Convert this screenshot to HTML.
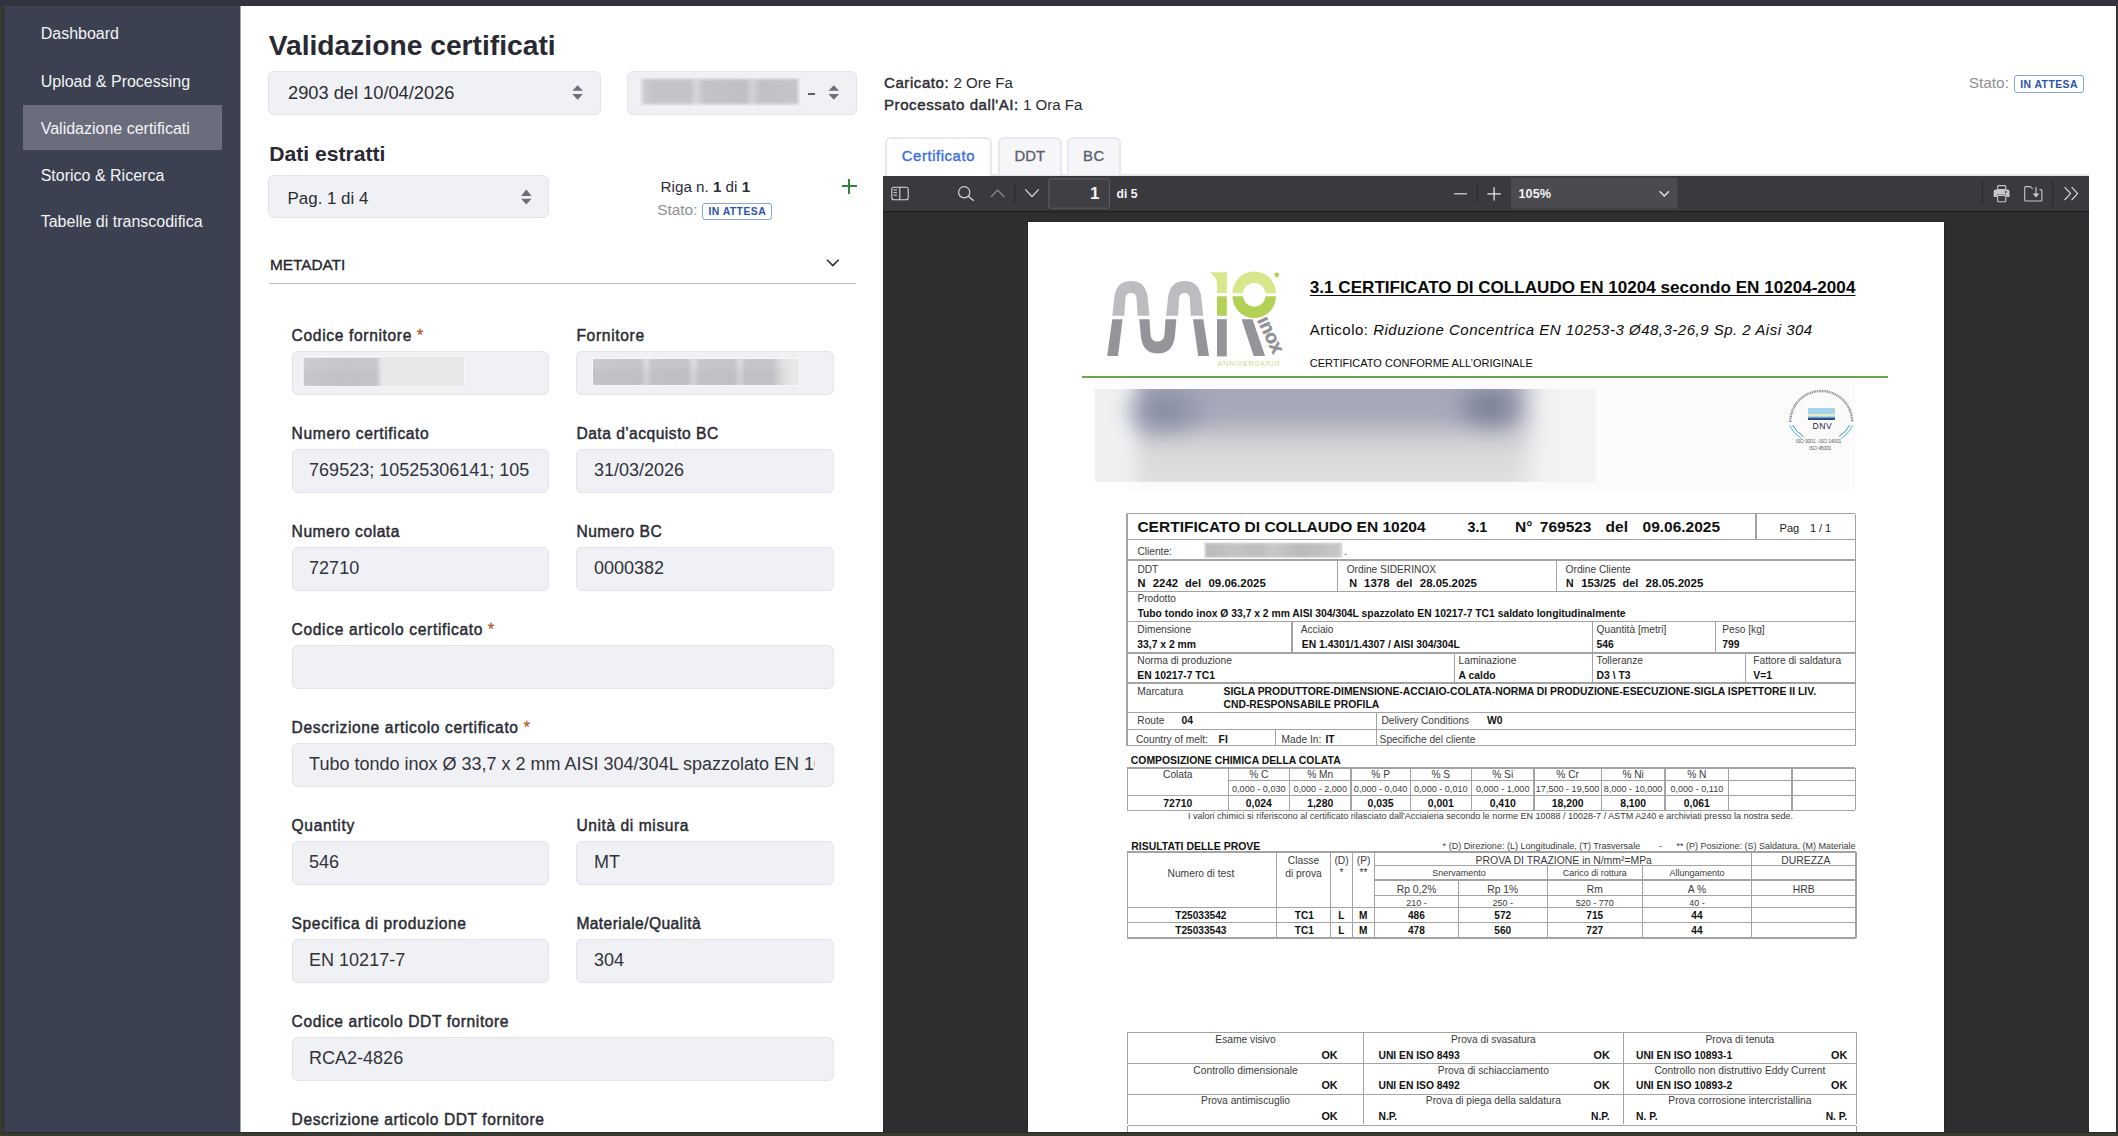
<!DOCTYPE html>
<html><head><meta charset="utf-8"><style>*{box-sizing:border-box;margin:0;padding:0}
html,body{width:2118px;height:1136px;overflow:hidden;background:#363d2f;font-family:"Liberation Sans",sans-serif;position:relative}
div{position:absolute}
.t{white-space:nowrap;line-height:1}
svg{position:absolute;overflow:visible}
</style></head><body>
<div style="left:0.00px;top:0.00px;width:2118.00px;height:6.00px;background:#33333f;"></div>
<div style="left:3.00px;top:6.00px;width:1.00px;height:1127.00px;background:#2b2b2f;"></div>
<div style="left:2116.00px;top:6.00px;width:1.00px;height:1127.00px;background:#2b2b2f;"></div>
<div style="left:3.00px;top:1132.00px;width:2114.00px;height:1.00px;background:#2b2b2f;"></div>
<div style="left:4.00px;top:6.00px;width:236.00px;height:1126.00px;background:#3b4150;"></div>
<div style="left:240.00px;top:6.00px;width:1.00px;height:1126.00px;background:#a3a5ae;"></div>
<div style="left:23.00px;top:105.00px;width:199.00px;height:45.00px;background:#6b6c7c;"></div>
<div class="t" style="left:40.70px;top:26.00px;font-size:16.00px;color:#f3f4f6;">Dashboard</div>
<div class="t" style="left:40.70px;top:74.00px;font-size:16.00px;color:#f3f4f6;">Upload &amp; Processing</div>
<div class="t" style="left:40.70px;top:121.00px;font-size:16.00px;color:#f3f4f6;">Validazione certificati</div>
<div class="t" style="left:40.70px;top:168.00px;font-size:16.00px;color:#f3f4f6;">Storico &amp; Ricerca</div>
<div class="t" style="left:40.70px;top:214.00px;font-size:16.00px;color:#f3f4f6;">Tabelle di transcodifica</div>
<div style="left:241.00px;top:6.00px;width:1875.00px;height:1126.00px;background:#ffffff;"></div>
<div class="t" style="left:268.70px;top:31.00px;font-size:28.22px;color:#282933;font-weight:bold;">Validazione certificati</div>
<div style="left:268.00px;top:71.00px;width:332.50px;height:43.50px;background:#f0f1f4;border:1px solid #e3e4e9;border-radius:6px;"></div>
<div class="t" style="left:288.00px;top:84.00px;font-size:18.26px;color:#2b2c34;">2903 del 10/04/2026</div>
<svg style="left:0;top:0" width="1" height="1"><polygon points="572.35,90.7 582.85,90.7 577.6,85.2" fill="#6c6d7d"/><polygon points="572.35,94 582.85,94 577.6,99.8" fill="#6c6d7d"/></svg>
<div style="left:627.00px;top:71.00px;width:230.00px;height:43.50px;background:#f0f1f4;border:1px solid #e3e4e9;border-radius:6px;"></div>
<div style="left:639.00px;top:77.30px;width:162.00px;height:29.30px;background:#ececee;border:1px solid #f6f6f8;"></div>
<div style="left:642.00px;top:79.00px;width:156.00px;height:25.00px;background:linear-gradient(90deg,#cfd0d3 0%,#c3c4c8 6%,#c3c4c8 31%,#d6d7da 35%,#c2c3c7 40%,#bfc0c4 66%,#d2d3d6 71%,#c0c1c5 76%,#c4c5c9 100%);filter:blur(1.5px);"></div>
<div style="left:808.00px;top:93.20px;width:6.50px;height:1.80px;background:#5c5d66;"></div>
<svg style="left:0;top:0" width="1" height="1"><polygon points="828.55,90.7 839.05,90.7 833.8,85.2" fill="#6c6d7d"/><polygon points="828.55,94 839.05,94 833.8,99.8" fill="#6c6d7d"/></svg>
<div class="t" style="left:269.20px;top:143.00px;font-size:21.12px;color:#282933;font-weight:bold;">Dati estratti</div>
<div style="left:268.00px;top:175.30px;width:281.00px;height:43.20px;background:#f0f1f4;border:1px solid #e3e4e9;border-radius:6px;"></div>
<div class="t" style="left:287.60px;top:191.00px;font-size:16.90px;color:#2b2c34;">Pag. 1 di 4</div>
<svg style="left:0;top:0" width="1" height="1"><polygon points="521.05,195.9 531.55,195.9 526.3,189.5" fill="#6c6d7d"/><polygon points="521.05,198.7 531.55,198.7 526.3,204.4" fill="#6c6d7d"/></svg>
<div class="t" style="left:660.6px;top:179px;font-size:15.2px;color:#2b2c34">Riga n. <b>1</b> di <b>1</b></div>
<div class="t" style="left:657.20px;top:202.00px;font-size:15.42px;color:#8f8f93;">Stato:</div>
<div style="left:702.40px;top:202.60px;width:69.60px;height:17.10px;background:#ffffff;border:1px solid #86a4e2;border-radius:3px;"></div>
<div class="t" style="left:708.40px;top:207.00px;font-size:10.40px;color:#2c52ae;font-weight:bold;letter-spacing:0.45px;">IN ATTESA</div>
<div style="left:841.70px;top:185.20px;width:15.30px;height:1.80px;background:#35833a;"></div>
<div style="left:848.40px;top:178.50px;width:1.80px;height:15.20px;background:#35833a;"></div>
<div class="t" style="left:269.90px;top:257.00px;font-size:15.36px;color:#25262e;-webkit-text-stroke:0.35px #25262e;">METADATI</div>
<div style="left:269.00px;top:282.50px;width:587.00px;height:1.50px;background:#b9bacb;"></div>
<svg style="left:0;top:0" width="1" height="1"><polyline points="827,259.8 832.8,265.6 838.6,259.8" fill="none" stroke="#2d2e36" stroke-width="1.6"/></svg>
<div class="t" style="left:291.6px;top:328px;font-size:15.6px;color:#2a2b33;-webkit-text-stroke:0.45px #2a2b33;letter-spacing:0.647px">Codice fornitore <span style="color:#b5561f;-webkit-text-stroke:0.3px #b5561f">*</span></div>
<div style="left:291.60px;top:351.20px;width:257.40px;height:43.50px;background:#f0f1f4;border:1px solid #e3e4e9;border-radius:6px;"></div>
<div class="t" style="left:576.4px;top:328px;font-size:15.6px;color:#2a2b33;-webkit-text-stroke:0.45px #2a2b33;letter-spacing:0.671px">Fornitore</div>
<div style="left:576.40px;top:351.20px;width:257.60px;height:43.50px;background:#f0f1f4;border:1px solid #e3e4e9;border-radius:6px;"></div>
<div class="t" style="left:291.6px;top:426px;font-size:15.6px;color:#2a2b33;-webkit-text-stroke:0.45px #2a2b33;letter-spacing:0.625px">Numero certificato</div>
<div style="left:291.60px;top:449.20px;width:257.40px;height:43.50px;background:#f0f1f4;border:1px solid #e3e4e9;border-radius:6px;"></div>
<div style="left:309.1px;top:449.2px;width:220.89999999999998px;height:43.5px;overflow:hidden"><div class="t" style="left:0;top:11.80px;font-size:18px;color:#32333b">769523; 10525306141; 10525306141</div></div>
<div class="t" style="left:576.4px;top:426px;font-size:15.6px;color:#2a2b33;-webkit-text-stroke:0.45px #2a2b33;letter-spacing:0.519px">Data d&#x27;acquisto BC</div>
<div style="left:576.40px;top:449.20px;width:257.60px;height:43.50px;background:#f0f1f4;border:1px solid #e3e4e9;border-radius:6px;"></div>
<div style="left:593.9px;top:449.2px;width:221.10000000000002px;height:43.5px;overflow:hidden"><div class="t" style="left:0;top:11.80px;font-size:18px;color:#32333b">31/03/2026</div></div>
<div class="t" style="left:291.6px;top:524px;font-size:15.6px;color:#2a2b33;-webkit-text-stroke:0.45px #2a2b33;letter-spacing:0.532px">Numero colata</div>
<div style="left:291.60px;top:547.20px;width:257.40px;height:43.50px;background:#f0f1f4;border:1px solid #e3e4e9;border-radius:6px;"></div>
<div style="left:309.1px;top:547.2px;width:220.89999999999998px;height:43.5px;overflow:hidden"><div class="t" style="left:0;top:11.80px;font-size:18px;color:#32333b">72710</div></div>
<div class="t" style="left:576.4px;top:524px;font-size:15.6px;color:#2a2b33;-webkit-text-stroke:0.45px #2a2b33;letter-spacing:0.480px">Numero BC</div>
<div style="left:576.40px;top:547.20px;width:257.60px;height:43.50px;background:#f0f1f4;border:1px solid #e3e4e9;border-radius:6px;"></div>
<div style="left:593.9px;top:547.2px;width:221.10000000000002px;height:43.5px;overflow:hidden"><div class="t" style="left:0;top:11.80px;font-size:18px;color:#32333b">0000382</div></div>
<div class="t" style="left:291.6px;top:622px;font-size:15.6px;color:#2a2b33;-webkit-text-stroke:0.45px #2a2b33;letter-spacing:0.641px">Codice articolo certificato <span style="color:#b5561f;-webkit-text-stroke:0.3px #b5561f">*</span></div>
<div style="left:291.60px;top:645.20px;width:542.40px;height:43.50px;background:#f0f1f4;border:1px solid #e3e4e9;border-radius:6px;"></div>
<div class="t" style="left:291.6px;top:720px;font-size:15.6px;color:#2a2b33;-webkit-text-stroke:0.45px #2a2b33;letter-spacing:0.623px">Descrizione articolo certificato <span style="color:#b5561f;-webkit-text-stroke:0.3px #b5561f">*</span></div>
<div style="left:291.60px;top:743.20px;width:542.40px;height:43.50px;background:#f0f1f4;border:1px solid #e3e4e9;border-radius:6px;"></div>
<div style="left:309.1px;top:743.2px;width:505.9px;height:43.5px;overflow:hidden"><div class="t" style="left:0;top:11.80px;font-size:18px;color:#32333b">Tubo tondo inox Ø 33,7 x 2 mm AISI 304/304L spazzolato EN 10217-7</div></div>
<div class="t" style="left:291.6px;top:818px;font-size:15.6px;color:#2a2b33;-webkit-text-stroke:0.45px #2a2b33;letter-spacing:0.647px">Quantity</div>
<div style="left:291.60px;top:841.20px;width:257.40px;height:43.50px;background:#f0f1f4;border:1px solid #e3e4e9;border-radius:6px;"></div>
<div style="left:309.1px;top:841.2px;width:220.89999999999998px;height:43.5px;overflow:hidden"><div class="t" style="left:0;top:11.80px;font-size:18px;color:#32333b">546</div></div>
<div class="t" style="left:576.4px;top:818px;font-size:15.6px;color:#2a2b33;-webkit-text-stroke:0.45px #2a2b33;letter-spacing:0.577px">Unità di misura</div>
<div style="left:576.40px;top:841.20px;width:257.60px;height:43.50px;background:#f0f1f4;border:1px solid #e3e4e9;border-radius:6px;"></div>
<div style="left:593.9px;top:841.2px;width:221.10000000000002px;height:43.5px;overflow:hidden"><div class="t" style="left:0;top:11.80px;font-size:18px;color:#32333b">MT</div></div>
<div class="t" style="left:291.6px;top:916px;font-size:15.6px;color:#2a2b33;-webkit-text-stroke:0.45px #2a2b33;letter-spacing:0.599px">Specifica di produzione</div>
<div style="left:291.60px;top:939.20px;width:257.40px;height:43.50px;background:#f0f1f4;border:1px solid #e3e4e9;border-radius:6px;"></div>
<div style="left:309.1px;top:939.2px;width:220.89999999999998px;height:43.5px;overflow:hidden"><div class="t" style="left:0;top:11.80px;font-size:18px;color:#32333b">EN 10217-7</div></div>
<div class="t" style="left:576.4px;top:916px;font-size:15.6px;color:#2a2b33;-webkit-text-stroke:0.45px #2a2b33;letter-spacing:0.407px">Materiale/Qualità</div>
<div style="left:576.40px;top:939.20px;width:257.60px;height:43.50px;background:#f0f1f4;border:1px solid #e3e4e9;border-radius:6px;"></div>
<div style="left:593.9px;top:939.2px;width:221.10000000000002px;height:43.5px;overflow:hidden"><div class="t" style="left:0;top:11.80px;font-size:18px;color:#32333b">304</div></div>
<div class="t" style="left:291.6px;top:1014px;font-size:15.6px;color:#2a2b33;-webkit-text-stroke:0.45px #2a2b33;letter-spacing:0.575px">Codice articolo DDT fornitore</div>
<div style="left:291.60px;top:1037.20px;width:542.40px;height:43.50px;background:#f0f1f4;border:1px solid #e3e4e9;border-radius:6px;"></div>
<div style="left:309.1px;top:1037.2px;width:505.9px;height:43.5px;overflow:hidden"><div class="t" style="left:0;top:11.80px;font-size:18px;color:#32333b">RCA2-4826</div></div>
<div class="t" style="left:291.6px;top:1112px;font-size:15.6px;color:#2a2b33;-webkit-text-stroke:0.45px #2a2b33;letter-spacing:0.568px">Descrizione articolo DDT fornitore</div>
<div style="left:302.20px;top:356.40px;width:163.10px;height:31.00px;background:#e9e9eb;border:1.5px solid #f7f7f8;"></div>
<div style="left:304px;top:358px;width:159.5px;height:28px;overflow:hidden"><div style="left:-6px;top:-6px;width:171px;height:40px;filter:blur(1.6px);background:
linear-gradient(90deg,rgba(255,255,255,0) 0px,rgba(255,255,255,0) 80px,#e8e8ea 84px),
linear-gradient(180deg,rgba(200,201,206,0) 0px,rgba(200,201,206,0) 14px,rgba(175,176,182,0.22) 22px,rgba(175,176,182,0.22) 32px,rgba(200,201,206,0) 40px),
linear-gradient(90deg,#cdced2 0px,#cbccd0 12px,#c6c7cb 40px,#c7c8cc 78px,#e8e8ea 85px,#e9e9eb 171px)"></div></div>
<div style="left:591.90px;top:357.90px;width:208.50px;height:28.40px;background:#eaeaec;border:1.5px solid #f7f7f8;"></div>
<div style="left:593.4px;top:359.4px;width:205.5px;height:25.4px;overflow:hidden"><div style="left:-6px;top:-6px;width:217.5px;height:37.4px;filter:blur(1.6px);background:
linear-gradient(90deg,rgba(233,233,235,0) 0px,rgba(233,233,235,0) 186px,#e6e6e8 205px,#e9e9eb 217px),
linear-gradient(180deg,rgba(200,201,206,0) 0px,rgba(200,201,206,0) 12px,rgba(170,171,178,0.22) 19px,rgba(170,171,178,0.22) 29px,rgba(200,201,206,0) 37px),
linear-gradient(90deg,#cbccd0 0px,#c7c8cc 20px,#c5c6ca 54px,#dadbde 58px,#dadbde 61px,#c6c7cb 64px,#c4c5c9 101px,#dcdde0 105px,#dcdde0 108px,#c6c7cb 112px,#c5c6ca 148px,#dadbdd 152px,#dadbdd 154px,#c6c7cb 158px,#c6c7cb 186px,#dfe0e2 200px,#e9e9eb 217px)"></div></div>
<div class="t" style="left:884px;top:75px;font-size:15.05px;color:#2a2b33"><span style="-webkit-text-stroke:0.45px #2a2b33;letter-spacing:0.557px">Caricato:</span> 2 Ore Fa</div>
<div class="t" style="left:884px;top:97px;font-size:15.05px;color:#2a2b33"><span style="-webkit-text-stroke:0.45px #2a2b33;letter-spacing:0.564px">Processato dall&#x27;AI:</span> 1 Ora Fa</div>
<div class="t" style="left:1968.70px;top:75.00px;font-size:15.42px;color:#8f8f93;">Stato:</div>
<div style="left:2014.40px;top:75.20px;width:69.60px;height:17.40px;background:#ffffff;border:1px solid #86a4e2;border-radius:3px;"></div>
<div class="t" style="left:2020.20px;top:80.00px;font-size:10.40px;color:#2c52ae;font-weight:bold;letter-spacing:0.45px;">IN ATTESA</div>
<div style="left:992.00px;top:174.00px;width:1096.70px;height:2.00px;background:#e6e6ee;"></div>
<div style="left:884.60px;top:137.30px;width:107.60px;height:38.70px;background:#ffffff;border:2px solid #e8e8f0;border-bottom:none;border-radius:6px 6px 0 0;"></div>
<div style="left:998.00px;top:137.30px;width:63.60px;height:37.70px;background:#f6f6f9;border:2px solid #e8e8f0;border-bottom:none;border-radius:6px 6px 0 0;"></div>
<div style="left:1067.00px;top:137.30px;width:53.50px;height:37.70px;background:#f6f6f9;border:2px solid #e8e8f0;border-bottom:none;border-radius:6px 6px 0 0;"></div>
<div class="t" style="left:901.80px;top:149.00px;font-size:14.80px;color:#3b6ee6;letter-spacing:0.5971926136363632px;-webkit-text-stroke:0.4px #3b6ee6;">Certificato</div>
<div class="t" style="left:1014.59px;top:149.00px;font-size:14.80px;color:#5d6075;-webkit-text-stroke:0.4px #5d6075;">DDT</div>
<div class="t" style="left:1083.11px;top:149.00px;font-size:14.80px;color:#5d6075;letter-spacing:0.40827187500000073px;-webkit-text-stroke:0.4px #5d6075;">BC</div>
<div style="left:883.20px;top:176.00px;width:1205.50px;height:35.00px;background:#3a393e;"></div>
<div style="left:883.20px;top:211.00px;width:1205.50px;height:1.00px;background:#1b1b1d;"></div>
<div style="left:883.20px;top:212.00px;width:1205.50px;height:920.00px;background:#2e2e30;"></div>
<svg style="left:0;top:0" width="1" height="1">
<rect x="891.8" y="187.2" width="16.4" height="12.6" rx="2" fill="none" stroke="#d6d6d8" stroke-width="1.1"/>
<line x1="899.8" y1="187.2" x2="899.8" y2="199.8" stroke="#d6d6d8" stroke-width="1.1"/>
<line x1="893.5" y1="190" x2="897" y2="190" stroke="#d6d6d8" stroke-width="1"/>
<line x1="893.5" y1="192.6" x2="897" y2="192.6" stroke="#d6d6d8" stroke-width="1"/>
<line x1="893.5" y1="195.2" x2="897" y2="195.2" stroke="#d6d6d8" stroke-width="1"/>
<circle cx="964.2" cy="192.3" r="5.6" fill="none" stroke="#d6d6d8" stroke-width="1.2"/>
<line x1="968.2" y1="196.3" x2="973.8" y2="200.8" stroke="#d6d6d8" stroke-width="1.3"/>
<polyline points="991,197 997.6,190.2 1004.3,197" fill="none" stroke="#8b8b90" stroke-width="1.2"/>
<line x1="1014.8" y1="184.3" x2="1014.8" y2="202.5" stroke="#27272b" stroke-width="1"/>
<polyline points="1025.3,189.3 1032,196.6 1038.7,189.3" fill="none" stroke="#e2e2e4" stroke-width="1.2"/>
<rect x="1048.8" y="178.8" width="60.8" height="29.4" rx="2" fill="#3f3f44" stroke="#606065" stroke-width="1"/>
<line x1="1454" y1="193.8" x2="1467" y2="193.8" stroke="#cfcfd1" stroke-width="1.3"/>
<line x1="1477.4" y1="184.3" x2="1477.4" y2="202.5" stroke="#27272b" stroke-width="1"/>
<line x1="1487.4" y1="193.9" x2="1500.8" y2="193.9" stroke="#e6e6e8" stroke-width="1.3"/>
<line x1="1494.1" y1="187.2" x2="1494.1" y2="200.6" stroke="#e6e6e8" stroke-width="1.3"/>
<rect x="1511" y="177.9" width="166.6" height="30.6" fill="#4a4a4f"/>
<polyline points="1659.6,191.2 1664.3,195.9 1669,191.2" fill="none" stroke="#e6e6e8" stroke-width="1.4"/>
<line x1="1982.4" y1="181" x2="1982.4" y2="205.5" stroke="#27272b" stroke-width="1"/>
<line x1="2052.7" y1="181" x2="2052.7" y2="205.5" stroke="#27272b" stroke-width="1"/>
<rect x="1997.6" y="185.6" width="8.2" height="4" rx="1" fill="none" stroke="#c8c8ca" stroke-width="1.1"/>
<path d="M1995.5,189.6 h12.2 a1.8,1.8 0 0 1 1.8,1.8 v5.6 h-3.2 v-2.6 h-9.4 v2.6 h-3.2 v-5.6 a1.8,1.8 0 0 1 1.8,-1.8z" fill="#c8c8ca"/>
<rect x="1997.6" y="195.4" width="8.2" height="6.4" rx="0.8" fill="none" stroke="#c8c8ca" stroke-width="1.1"/>
<circle cx="2005.8" cy="192" r="0.9" fill="#3a393e"/>
<path d="M2030.5,186.6 h-4.8 a1,1 0 0 0 -1,1 v12.4 a1,1 0 0 0 1,1 h15.2 a1,1 0 0 0 1,-1 v-9.4 a1,1 0 0 0 -1,-1 h-1.4" fill="none" stroke="#c8c8ca" stroke-width="1.1"/>
<path d="M2030.5,186.6 l2.2,2.4" fill="none" stroke="#c8c8ca" stroke-width="1.1"/>
<line x1="2036" y1="187" x2="2036" y2="195" stroke="#c8c8ca" stroke-width="1.2"/>
<polygon points="2032.6,193.4 2039.4,193.4 2036,197.6" fill="#c8c8ca"/>
<polyline points="2064.6,187.2 2070.6,193.6 2064.6,200" fill="none" stroke="#dedee0" stroke-width="1.1"/>
<polyline points="2071.6,187.2 2077.6,193.6 2071.6,200" fill="none" stroke="#dedee0" stroke-width="1.1"/>
</svg>
<div class="t" style="left:1090.05px;top:185.00px;font-size:17.00px;color:#f2f2f4;font-weight:bold;">1</div>
<div class="t" style="left:1116.50px;top:188.00px;font-size:12.19px;color:#f2f2f4;font-weight:bold;">di 5</div>
<div class="t" style="left:1518.60px;top:188.00px;font-size:12.63px;color:#f2f2f4;font-weight:bold;">105%</div>
<div style="left:1027.00px;top:221.00px;width:918.00px;height:911.00px;background:#262628;"></div>
<div style="left:1028.00px;top:222.00px;width:916.00px;height:910.00px;background:#ffffff;"></div>
<svg style="left:0;top:0" width="1" height="1">
<path d="M1112.3,315.8 L1114.5,296 Q1117,280.9 1131,280.9 Q1145,280.9 1147.5,296 L1149.5,315.8 L1137.5,315.8 L1136.5,298 Q1136,292.9 1131,292.9 Q1126,292.9 1125.5,298 L1124.3,315.8 Z" fill="#bdbdc1"/>
<path d="M1166.1,315.8 L1168.3,296 Q1170.8,280.9 1184.7,280.9 Q1198.6,280.9 1201.1,296 L1203.3,315.8 L1190.7,315.8 L1189.8,298 Q1189.3,292.9 1184.5,292.9 Q1179.6,292.9 1179.1,298 L1178.1,315.8 Z" fill="#bdbdc1"/>
<path d="M1112.3,319.2 L1122.6,319.2 L1118,355.9 L1107.2,355.9 Z" fill="#949499"/>
<path d="M1139.2,319.2 L1149.5,319.2 L1150.5,335 Q1151.5,341.6 1157.5,341.6 Q1163.5,341.6 1164.5,335 L1165.5,319.2 L1176.4,319.2 L1174.8,337 Q1172.5,353.6 1157.8,353.6 Q1143,353.6 1141,337 Z" fill="#949499"/>
<path d="M1193,319.2 L1203.3,319.2 L1209,355.9 L1198.2,355.9 Z" fill="#949499"/>
<rect x="1217" y="319.2" width="9.8" height="37.2" fill="#949499"/>
<path d="M1241.6,319.2 L1252.5,319.2 L1265.1,355.9 L1253.7,355.9 Z" fill="#949499"/>
<path d="M1209.6,272.3 L1226.8,272.3 L1226.8,292.9 L1217,292.9 L1217,283 Q1216,276 1209.6,272.3 Z" fill="#d8e68c"/>
<rect x="1217" y="296.3" width="9.8" height="19.5" fill="#b3d155"/>
<path d="M1232.5,293.2 A21.75,21.75 0 0 1 1276,293.2 L1265.6,293.2 A11.4,11.4 0 0 0 1242.9,293.2 Z" fill="#d8e68c"/>
<path d="M1232.5,296.3 A21.75,21.75 0 0 0 1276,296.3 L1265.6,296.3 A11.4,11.4 0 0 1 1242.9,296.3 Z" fill="#b3d155"/>
<circle cx="1276.8" cy="275" r="2.4" fill="#b3d155"/>
</svg>
<div class="t" style="left:1257px;top:304px;font-size:19px;font-weight:bold;color:#8f8f94;transform-origin:0 16.07px;transform:rotate(65deg);letter-spacing:-0.2px;-webkit-text-stroke:0.5px #8f8f94">ınox</div>
<div class="t" style="left:1217.50px;top:360.00px;font-size:7.00px;color:#c9dc7e;letter-spacing:0.84px;">ANNIVERSARIO</div>
<div class="t" style="left:1309.8px;top:279px;font-size:17.1px;font-weight:bold;color:#0a0a0a;text-decoration:underline;text-decoration-thickness:1px;text-underline-offset:1.5px;">3.1 CERTIFICATO DI COLLAUDO EN 10204 secondo EN 10204-2004</div>
<div class="t" style="left:1309.8px;top:322px;font-size:15px;color:#0a0a0a;letter-spacing:0.5px">Articolo: <i>Riduzione Concentrica EN 10253-3 Ø48,3-26,9 Sp. 2 Aisi 304</i></div>
<div class="t" style="left:1309.80px;top:358.00px;font-size:11.00px;color:#0a0a0a;">CERTIFICATO CONFORME ALL’ORIGINALE</div>
<div style="left:1081.70px;top:375.60px;width:806.30px;height:2.20px;background:#68a84a;"></div>
<div style="left:1128.00px;top:382.50px;width:727.00px;height:106.50px;background:#fbfbfb;"></div>
<div style="left:1094.5px;top:388.5px;width:501.5px;height:93px;overflow:hidden;background:#f3f3f4">
<div style="left:-14px;top:-14px;width:530px;height:121px;filter:blur(7px);background:
radial-gradient(ellipse 50px 32px at 84px 36px,#858aa2 0%,rgba(133,138,162,0) 100%),
radial-gradient(ellipse 40px 30px at 408px 32px,#767b93 0%,rgba(122,127,151,0) 100%),
linear-gradient(90deg,#eff0f1 0px,#eff0f1 46px,rgba(239,240,241,0) 66px,rgba(244,244,245,0) 432px,#f2f2f3 462px,#f4f4f5 530px),
linear-gradient(180deg,#a4a7b8 0px,#a4a7b8 14px,#a8abbb 44px,#c9c9ce 62px,#d9d9dc 78px,#dedee0 100px,#e4e4e6 121px)"></div></div>
<svg style="left:0;top:0" width="1" height="1">
<path d="M1790.2,422 A31,31 0 0 1 1852.2,422" fill="none" stroke="#8a8a8a" stroke-width="2.4" stroke-dasharray="1 0.7"/>
<path d="M1789.6,425 A31.8,31.8 0 0 0 1801.5,438.5" fill="none" stroke="#74cbe6" stroke-width="1.1"/>
<path d="M1792.6,425 A28.8,28.8 0 0 0 1803.5,436.5" fill="none" stroke="#3f7fae" stroke-width="0.9"/>
<path d="M1852.8,425 A31.8,31.8 0 0 1 1840.9,438.5" fill="none" stroke="#74cbe6" stroke-width="1.1"/>
<path d="M1849.8,425 A28.8,28.8 0 0 1 1838.9,436.5" fill="none" stroke="#3f7fae" stroke-width="0.9"/>
<rect x="1808" y="408" width="27" height="6" fill="#a4d4ec"/>
<rect x="1808" y="414.3" width="27" height="1.6" fill="#dfe9b8"/>
<rect x="1808" y="416.4" width="27" height="1.1" fill="#7ab6d8"/>
<rect x="1808" y="417.6" width="27" height="2.4" fill="#27508a"/>
</svg>
<div class="t" style="left:1812.42px;top:422.00px;font-size:8.60px;color:#1d2547;letter-spacing:0.6px;">DNV</div>
<div class="t" style="left:1795.77px;top:439.00px;font-size:5.20px;color:#666;letter-spacing:-0.3px;">ISO 9001 - ISO 14001</div>
<div class="t" style="left:1809.07px;top:446.00px;font-size:5.20px;color:#666;letter-spacing:-0.3px;">ISO 45001</div>
<div style="left:1126.90px;top:513.05px;width:728.60px;height:1.30px;background:#a3a3a3;"></div>
<div style="left:1126.90px;top:538.65px;width:728.60px;height:1.30px;background:#a3a3a3;"></div>
<div style="left:1126.90px;top:559.35px;width:728.60px;height:1.30px;background:#a3a3a3;"></div>
<div style="left:1126.90px;top:590.75px;width:728.60px;height:1.30px;background:#a3a3a3;"></div>
<div style="left:1126.90px;top:621.05px;width:728.60px;height:1.30px;background:#a3a3a3;"></div>
<div style="left:1126.90px;top:652.35px;width:728.60px;height:1.30px;background:#a3a3a3;"></div>
<div style="left:1126.90px;top:682.45px;width:728.60px;height:1.30px;background:#a3a3a3;"></div>
<div style="left:1126.90px;top:711.55px;width:728.60px;height:1.30px;background:#a3a3a3;"></div>
<div style="left:1126.90px;top:728.75px;width:728.60px;height:1.30px;background:#a3a3a3;"></div>
<div style="left:1126.90px;top:745.05px;width:728.60px;height:1.30px;background:#a3a3a3;"></div>
<div style="left:1126.25px;top:513.70px;width:1.30px;height:232.00px;background:#a3a3a3;"></div>
<div style="left:1854.85px;top:513.70px;width:1.30px;height:232.00px;background:#a3a3a3;"></div>
<div style="left:1755.45px;top:513.70px;width:1.30px;height:25.60px;background:#a3a3a3;"></div>
<div style="left:1336.95px;top:560.00px;width:1.30px;height:31.40px;background:#a3a3a3;"></div>
<div style="left:1556.05px;top:560.00px;width:1.30px;height:31.40px;background:#a3a3a3;"></div>
<div style="left:1291.25px;top:621.70px;width:1.30px;height:31.30px;background:#a3a3a3;"></div>
<div style="left:1591.65px;top:621.70px;width:1.30px;height:31.30px;background:#a3a3a3;"></div>
<div style="left:1714.65px;top:621.70px;width:1.30px;height:31.30px;background:#a3a3a3;"></div>
<div style="left:1453.85px;top:653.00px;width:1.30px;height:30.10px;background:#a3a3a3;"></div>
<div style="left:1591.65px;top:653.00px;width:1.30px;height:30.10px;background:#a3a3a3;"></div>
<div style="left:1745.05px;top:653.00px;width:1.30px;height:30.10px;background:#a3a3a3;"></div>
<div style="left:1375.65px;top:712.20px;width:1.30px;height:33.50px;background:#a3a3a3;"></div>
<div style="left:1274.65px;top:729.40px;width:1.30px;height:16.30px;background:#a3a3a3;"></div>
<div class="t" style="left:1137.40px;top:519.00px;font-size:15.52px;color:#111111;font-weight:bold;">CERTIFICATO DI COLLAUDO EN 10204</div>
<div class="t" style="left:1467.50px;top:520.00px;font-size:14.24px;color:#111111;font-weight:bold;">3.1</div>
<div class="t" style="left:1515.10px;top:519.00px;font-size:15.50px;color:#111111;font-weight:bold;">N°</div>
<div class="t" style="left:1539.80px;top:519.00px;font-size:15.49px;color:#111111;font-weight:bold;">769523</div>
<div class="t" style="left:1605.60px;top:519.00px;font-size:15.50px;color:#111111;font-weight:bold;">del</div>
<div class="t" style="left:1642.60px;top:519.00px;font-size:15.48px;color:#111111;font-weight:bold;">09.06.2025</div>
<div class="t" style="left:1779.60px;top:523.00px;font-size:11.07px;color:#222;">Pag</div>
<div class="t" style="left:1809.90px;top:523.00px;font-size:10.95px;color:#222;">1 / 1</div>
<div class="t" style="left:1137.40px;top:547.00px;font-size:10.20px;color:#3a3a3a;">Cliente:</div>
<div style="left:1203.50px;top:542.00px;width:139.50px;height:16.40px;background:#dcdcdc;border:1px solid #eee;"></div>
<div style="left:1206.00px;top:544.00px;width:134.00px;height:12.50px;background:linear-gradient(90deg,#b9b9b9,#c4c4c4 20%,#bdbdbd 40%,#c9c9c9 50%,#bababa 70%,#c6c6c6 100%);filter:blur(1.2px);"></div>
<div class="t" style="left:1344.20px;top:547.00px;font-size:10.20px;color:#3a3a3a;">.</div>
<div class="t" style="left:1137.40px;top:565.00px;font-size:10.20px;color:#3a3a3a;">DDT</div>
<div class="t" style="left:1137.40px;top:578.00px;font-size:11.08px;color:#111111;font-weight:bold;">N</div>
<div class="t" style="left:1152.80px;top:578.00px;font-size:11.37px;color:#111111;font-weight:bold;">2242</div>
<div class="t" style="left:1185.00px;top:578.00px;font-size:11.14px;color:#111111;font-weight:bold;">del</div>
<div class="t" style="left:1208.50px;top:578.00px;font-size:11.45px;color:#111111;font-weight:bold;">09.06.2025</div>
<div class="t" style="left:1346.70px;top:565.00px;font-size:10.20px;color:#3a3a3a;">Ordine SIDERINOX</div>
<div class="t" style="left:1349.20px;top:578.00px;font-size:10.80px;color:#111111;font-weight:bold;">N</div>
<div class="t" style="left:1364.10px;top:578.00px;font-size:11.46px;color:#111111;font-weight:bold;">1378</div>
<div class="t" style="left:1396.30px;top:578.00px;font-size:11.07px;color:#111111;font-weight:bold;">del</div>
<div class="t" style="left:1419.80px;top:578.00px;font-size:11.43px;color:#111111;font-weight:bold;">28.05.2025</div>
<div class="t" style="left:1565.60px;top:565.00px;font-size:10.20px;color:#3a3a3a;">Ordine Cliente</div>
<div class="t" style="left:1565.90px;top:578.00px;font-size:10.52px;color:#111111;font-weight:bold;">N</div>
<div class="t" style="left:1581.20px;top:578.00px;font-size:11.35px;color:#111111;font-weight:bold;">153/25</div>
<div class="t" style="left:1622.60px;top:578.00px;font-size:10.87px;color:#111111;font-weight:bold;">del</div>
<div class="t" style="left:1645.60px;top:578.00px;font-size:11.55px;color:#111111;font-weight:bold;">28.05.2025</div>
<div class="t" style="left:1137.40px;top:594.00px;font-size:10.20px;color:#3a3a3a;">Prodotto</div>
<div class="t" style="left:1137.40px;top:609.00px;font-size:10.34px;color:#111111;font-weight:bold;">Tubo tondo inox Ø 33,7 x 2 mm AISI 304/304L spazzolato EN 10217-7 TC1 saldato longitudinalmente</div>
<div class="t" style="left:1137.30px;top:625.00px;font-size:10.20px;color:#3a3a3a;">Dimensione</div>
<div class="t" style="left:1137.30px;top:640.00px;font-size:10.35px;color:#111111;font-weight:bold;">33,7 x 2 mm</div>
<div class="t" style="left:1300.70px;top:625.00px;font-size:10.20px;color:#3a3a3a;">Acciaio</div>
<div class="t" style="left:1301.80px;top:640.00px;font-size:10.34px;color:#111111;font-weight:bold;">EN 1.4301/1.4307 / AISI 304/304L</div>
<div class="t" style="left:1596.60px;top:625.00px;font-size:10.20px;color:#3a3a3a;">Quantità [metri]</div>
<div class="t" style="left:1596.60px;top:640.00px;font-size:10.35px;color:#111111;font-weight:bold;">546</div>
<div class="t" style="left:1722.20px;top:625.00px;font-size:10.20px;color:#3a3a3a;">Peso [kg]</div>
<div class="t" style="left:1722.20px;top:640.00px;font-size:10.35px;color:#111111;font-weight:bold;">799</div>
<div class="t" style="left:1137.30px;top:656.00px;font-size:10.20px;color:#3a3a3a;">Norma di produzione</div>
<div class="t" style="left:1137.30px;top:671.00px;font-size:10.35px;color:#111111;font-weight:bold;">EN 10217-7 TC1</div>
<div class="t" style="left:1458.60px;top:656.00px;font-size:10.20px;color:#3a3a3a;">Laminazione</div>
<div class="t" style="left:1458.60px;top:671.00px;font-size:10.35px;color:#111111;font-weight:bold;">A caldo</div>
<div class="t" style="left:1596.60px;top:656.00px;font-size:10.20px;color:#3a3a3a;">Tolleranze</div>
<div class="t" style="left:1596.60px;top:671.00px;font-size:10.35px;color:#111111;font-weight:bold;">D3 \ T3</div>
<div class="t" style="left:1753.30px;top:656.00px;font-size:10.20px;color:#3a3a3a;">Fattore di saldatura</div>
<div class="t" style="left:1753.30px;top:671.00px;font-size:10.35px;color:#111111;font-weight:bold;">V=1</div>
<div class="t" style="left:1137.30px;top:687.00px;font-size:10.20px;color:#3a3a3a;">Marcatura</div>
<div class="t" style="left:1223.50px;top:687.00px;font-size:10.38px;color:#111111;font-weight:bold;">SIGLA PRODUTTORE-DIMENSIONE-ACCIAIO-COLATA-NORMA DI PRODUZIONE-ESECUZIONE-SIGLA ISPETTORE II LIV.</div>
<div class="t" style="left:1223.50px;top:700.00px;font-size:10.35px;color:#111111;font-weight:bold;">CND-RESPONSABILE PROFILA</div>
<div class="t" style="left:1137.30px;top:716.00px;font-size:10.20px;color:#3a3a3a;">Route</div>
<div class="t" style="left:1181.60px;top:716.00px;font-size:10.35px;color:#111111;font-weight:bold;">04</div>
<div class="t" style="left:1381.40px;top:716.00px;font-size:10.20px;color:#3a3a3a;">Delivery Conditions</div>
<div class="t" style="left:1487.10px;top:716.00px;font-size:10.35px;color:#111111;font-weight:bold;">W0</div>
<div class="t" style="left:1136.00px;top:735.00px;font-size:10.20px;color:#3a3a3a;">Country of melt:</div>
<div class="t" style="left:1218.60px;top:735.00px;font-size:10.35px;color:#111111;font-weight:bold;">FI</div>
<div class="t" style="left:1281.60px;top:735.00px;font-size:10.20px;color:#3a3a3a;">Made In:</div>
<div class="t" style="left:1325.40px;top:735.00px;font-size:10.35px;color:#111111;font-weight:bold;">IT</div>
<div class="t" style="left:1379.60px;top:735.00px;font-size:10.20px;color:#3a3a3a;">Specifiche del cliente</div>
<div class="t" style="left:1130.80px;top:756.00px;font-size:10.42px;color:#111111;font-weight:bold;">COMPOSIZIONE CHIMICA DELLA COLATA</div>
<div style="left:1127.40px;top:767.45px;width:728.10px;height:1.30px;background:#a3a3a3;"></div>
<div style="left:1228.20px;top:779.75px;width:627.30px;height:1.30px;background:#a3a3a3;"></div>
<div style="left:1127.40px;top:794.95px;width:728.10px;height:1.30px;background:#a3a3a3;"></div>
<div style="left:1127.40px;top:809.65px;width:728.10px;height:1.30px;background:#a3a3a3;"></div>
<div style="left:1126.75px;top:768.10px;width:1.30px;height:42.20px;background:#a3a3a3;"></div>
<div style="left:1227.55px;top:768.10px;width:1.30px;height:42.20px;background:#a3a3a3;"></div>
<div style="left:1288.75px;top:768.10px;width:1.30px;height:42.20px;background:#a3a3a3;"></div>
<div style="left:1350.35px;top:768.10px;width:1.30px;height:42.20px;background:#a3a3a3;"></div>
<div style="left:1409.55px;top:768.10px;width:1.30px;height:42.20px;background:#a3a3a3;"></div>
<div style="left:1470.75px;top:768.10px;width:1.30px;height:42.20px;background:#a3a3a3;"></div>
<div style="left:1533.35px;top:768.10px;width:1.30px;height:42.20px;background:#a3a3a3;"></div>
<div style="left:1600.55px;top:768.10px;width:1.30px;height:42.20px;background:#a3a3a3;"></div>
<div style="left:1664.45px;top:768.10px;width:1.30px;height:42.20px;background:#a3a3a3;"></div>
<div style="left:1727.95px;top:768.10px;width:1.30px;height:42.20px;background:#a3a3a3;"></div>
<div style="left:1791.35px;top:768.10px;width:1.30px;height:42.20px;background:#a3a3a3;"></div>
<div style="left:1854.85px;top:768.10px;width:1.30px;height:42.20px;background:#a3a3a3;"></div>
<div class="t" style="left:1163.06px;top:770.00px;font-size:10.20px;color:#3a3a3a;">Colata</div>
<div class="t" style="left:1163.34px;top:799.00px;font-size:10.40px;color:#111111;font-weight:bold;">72710</div>
<div class="t" style="left:1249.17px;top:770.00px;font-size:10.20px;color:#3a3a3a;">% C</div>
<div class="t" style="left:1245.79px;top:799.00px;font-size:10.40px;color:#111111;font-weight:bold;">0,024</div>
<div class="t" style="left:1232.04px;top:785.00px;font-size:9.08px;color:#3a3a3a;">0,000 - 0,030</div>
<div class="t" style="left:1307.16px;top:770.00px;font-size:10.20px;color:#3a3a3a;">% Mn</div>
<div class="t" style="left:1307.19px;top:799.00px;font-size:10.40px;color:#111111;font-weight:bold;">1,280</div>
<div class="t" style="left:1293.44px;top:785.00px;font-size:9.08px;color:#3a3a3a;">0,000 - 2,000</div>
<div class="t" style="left:1371.25px;top:770.00px;font-size:10.20px;color:#3a3a3a;">% P</div>
<div class="t" style="left:1367.59px;top:799.00px;font-size:10.40px;color:#111111;font-weight:bold;">0,035</div>
<div class="t" style="left:1353.84px;top:785.00px;font-size:9.08px;color:#3a3a3a;">0,000 - 0,040</div>
<div class="t" style="left:1431.45px;top:770.00px;font-size:10.20px;color:#3a3a3a;">% S</div>
<div class="t" style="left:1427.79px;top:799.00px;font-size:10.40px;color:#111111;font-weight:bold;">0,001</div>
<div class="t" style="left:1414.04px;top:785.00px;font-size:9.08px;color:#3a3a3a;">0,000 - 0,010</div>
<div class="t" style="left:1492.21px;top:770.00px;font-size:10.20px;color:#3a3a3a;">% Si</div>
<div class="t" style="left:1489.69px;top:799.00px;font-size:10.40px;color:#111111;font-weight:bold;">0,410</div>
<div class="t" style="left:1475.94px;top:785.00px;font-size:9.08px;color:#3a3a3a;">0,000 - 1,000</div>
<div class="t" style="left:1556.27px;top:770.00px;font-size:10.20px;color:#3a3a3a;">% Cr</div>
<div class="t" style="left:1551.70px;top:799.00px;font-size:10.40px;color:#111111;font-weight:bold;">18,200</div>
<div class="t" style="left:1535.79px;top:785.00px;font-size:9.08px;color:#3a3a3a;">17,500 - 19,500</div>
<div class="t" style="left:1622.38px;top:770.00px;font-size:10.20px;color:#3a3a3a;">% Ni</div>
<div class="t" style="left:1620.14px;top:799.00px;font-size:10.40px;color:#111111;font-weight:bold;">8,100</div>
<div class="t" style="left:1603.87px;top:785.00px;font-size:9.08px;color:#3a3a3a;">8,000 - 10,000</div>
<div class="t" style="left:1687.22px;top:770.00px;font-size:10.20px;color:#3a3a3a;">% N</div>
<div class="t" style="left:1683.84px;top:799.00px;font-size:10.40px;color:#111111;font-weight:bold;">0,061</div>
<div class="t" style="left:1670.43px;top:785.00px;font-size:9.08px;color:#3a3a3a;">0,000 - 0,110</div>
<div class="t" style="left:1188.00px;top:812.00px;font-size:9.02px;color:#3a3a3a;">I valori chimici si riferiscono al certificato rilasciato dall&#x27;Acciaieria secondo le norme EN 10088 / 10028-7 / ASTM A240 e archiviati presso la nostra sede.</div>
<div class="t" style="left:1131.20px;top:842.00px;font-size:10.48px;color:#111111;font-weight:bold;">RISULTATI DELLE PROVE</div>
<div class="t" style="left:1442.60px;top:842.00px;font-size:9.05px;color:#3a3a3a;">* (D) Direzione: (L) Longitudinale, (T) Trasversale</div>
<div class="t" style="left:1658.90px;top:842.00px;font-size:9.00px;color:#3a3a3a;">-</div>
<div class="t" style="left:1676.50px;top:842.00px;font-size:9.00px;color:#3a3a3a;">** (P) Posizione: (S) Saldatura, (M) Materiale</div>
<div style="left:1127.30px;top:851.35px;width:728.70px;height:1.30px;background:#a3a3a3;"></div>
<div style="left:1374.50px;top:865.05px;width:481.50px;height:1.30px;background:#a3a3a3;"></div>
<div style="left:1374.50px;top:879.45px;width:481.50px;height:1.30px;background:#a3a3a3;"></div>
<div style="left:1374.50px;top:894.85px;width:481.50px;height:1.30px;background:#a3a3a3;"></div>
<div style="left:1127.30px;top:906.65px;width:728.70px;height:1.30px;background:#a3a3a3;"></div>
<div style="left:1127.30px;top:921.95px;width:728.70px;height:1.30px;background:#a3a3a3;"></div>
<div style="left:1127.30px;top:937.35px;width:728.70px;height:1.30px;background:#a3a3a3;"></div>
<div style="left:1126.65px;top:852.00px;width:1.30px;height:86.00px;background:#a3a3a3;"></div>
<div style="left:1275.75px;top:852.00px;width:1.30px;height:86.00px;background:#a3a3a3;"></div>
<div style="left:1329.85px;top:852.00px;width:1.30px;height:86.00px;background:#a3a3a3;"></div>
<div style="left:1352.05px;top:852.00px;width:1.30px;height:86.00px;background:#a3a3a3;"></div>
<div style="left:1373.85px;top:852.00px;width:1.30px;height:86.00px;background:#a3a3a3;"></div>
<div style="left:1855.35px;top:852.00px;width:1.30px;height:86.00px;background:#a3a3a3;"></div>
<div style="left:1457.65px;top:880.10px;width:1.30px;height:57.90px;background:#a3a3a3;"></div>
<div style="left:1546.65px;top:865.70px;width:1.30px;height:72.30px;background:#a3a3a3;"></div>
<div style="left:1641.65px;top:865.70px;width:1.30px;height:72.30px;background:#a3a3a3;"></div>
<div style="left:1750.85px;top:852.00px;width:1.30px;height:86.00px;background:#a3a3a3;"></div>
<div class="t" style="left:1167.50px;top:869.00px;font-size:10.27px;color:#3a3a3a;">Numero di test</div>
<div class="t" style="left:1287.76px;top:856.00px;font-size:10.30px;color:#3a3a3a;">Classe</div>
<div class="t" style="left:1285.18px;top:869.00px;font-size:10.30px;color:#3a3a3a;">di prova</div>
<div class="t" style="left:1334.45px;top:856.00px;font-size:10.30px;color:#3a3a3a;">(D)</div>
<div class="t" style="left:1339.60px;top:868.00px;font-size:10.30px;color:#3a3a3a;">*</div>
<div class="t" style="left:1356.73px;top:856.00px;font-size:10.30px;color:#3a3a3a;">(P)</div>
<div class="t" style="left:1359.59px;top:868.00px;font-size:10.30px;color:#3a3a3a;">**</div>
<div class="t" style="left:1475.60px;top:856.00px;font-size:10.41px;color:#3a3a3a;">PROVA DI TRAZIONE in N/mm²=MPa</div>
<div class="t" style="left:1781.34px;top:856.00px;font-size:10.40px;color:#3a3a3a;">DUREZZA</div>
<div class="t" style="left:1432.33px;top:869.00px;font-size:9.00px;color:#3a3a3a;">Snervamento</div>
<div class="t" style="left:1562.79px;top:869.00px;font-size:9.00px;color:#3a3a3a;">Carico di rottura</div>
<div class="t" style="left:1669.38px;top:869.00px;font-size:9.00px;color:#3a3a3a;">Allungamento</div>
<div class="t" style="left:1396.85px;top:885.00px;font-size:10.30px;color:#3a3a3a;">Rp 0,2%</div>
<div class="t" style="left:1487.34px;top:885.00px;font-size:10.30px;color:#3a3a3a;">Rp 1%</div>
<div class="t" style="left:1586.79px;top:885.00px;font-size:10.30px;color:#3a3a3a;">Rm</div>
<div class="t" style="left:1687.74px;top:885.00px;font-size:10.30px;color:#3a3a3a;">A %</div>
<div class="t" style="left:1792.83px;top:885.00px;font-size:10.30px;color:#3a3a3a;">HRB</div>
<div class="t" style="left:1406.14px;top:899.00px;font-size:9.00px;color:#3a3a3a;">210 -</div>
<div class="t" style="left:1492.54px;top:899.00px;font-size:9.00px;color:#3a3a3a;">250 -</div>
<div class="t" style="left:1575.78px;top:899.00px;font-size:9.00px;color:#3a3a3a;">520 - 770</div>
<div class="t" style="left:1689.15px;top:899.00px;font-size:9.00px;color:#3a3a3a;">40 -</div>
<div class="t" style="left:1175.35px;top:911.00px;font-size:10.10px;color:#111111;font-weight:bold;">T25033542</div>
<div class="t" style="left:1294.86px;top:911.00px;font-size:10.10px;color:#111111;font-weight:bold;">TC1</div>
<div class="t" style="left:1338.32px;top:911.00px;font-size:10.10px;color:#111111;font-weight:bold;">L</div>
<div class="t" style="left:1359.09px;top:911.00px;font-size:10.10px;color:#111111;font-weight:bold;">M</div>
<div class="t" style="left:1407.97px;top:911.00px;font-size:10.10px;color:#111111;font-weight:bold;">486</div>
<div class="t" style="left:1494.37px;top:911.00px;font-size:10.10px;color:#111111;font-weight:bold;">572</div>
<div class="t" style="left:1586.37px;top:911.00px;font-size:10.10px;color:#111111;font-weight:bold;">715</div>
<div class="t" style="left:1691.28px;top:911.00px;font-size:10.10px;color:#111111;font-weight:bold;">44</div>
<div class="t" style="left:1175.35px;top:926.00px;font-size:10.10px;color:#111111;font-weight:bold;">T25033543</div>
<div class="t" style="left:1294.86px;top:926.00px;font-size:10.10px;color:#111111;font-weight:bold;">TC1</div>
<div class="t" style="left:1338.32px;top:926.00px;font-size:10.10px;color:#111111;font-weight:bold;">L</div>
<div class="t" style="left:1359.09px;top:926.00px;font-size:10.10px;color:#111111;font-weight:bold;">M</div>
<div class="t" style="left:1407.97px;top:926.00px;font-size:10.10px;color:#111111;font-weight:bold;">478</div>
<div class="t" style="left:1494.37px;top:926.00px;font-size:10.10px;color:#111111;font-weight:bold;">560</div>
<div class="t" style="left:1586.37px;top:926.00px;font-size:10.10px;color:#111111;font-weight:bold;">727</div>
<div class="t" style="left:1691.28px;top:926.00px;font-size:10.10px;color:#111111;font-weight:bold;">44</div>
<div style="left:1127.60px;top:1031.75px;width:728.80px;height:1.30px;background:#a3a3a3;"></div>
<div style="left:1127.60px;top:1062.95px;width:728.80px;height:1.30px;background:#a3a3a3;"></div>
<div style="left:1127.60px;top:1093.55px;width:728.80px;height:1.30px;background:#a3a3a3;"></div>
<div style="left:1127.60px;top:1124.85px;width:728.80px;height:1.30px;background:#a3a3a3;"></div>
<div style="left:1126.95px;top:1032.40px;width:1.30px;height:91.60px;background:#a3a3a3;"></div>
<div style="left:1362.75px;top:1032.40px;width:1.30px;height:91.60px;background:#a3a3a3;"></div>
<div style="left:1622.65px;top:1032.40px;width:1.30px;height:91.60px;background:#a3a3a3;"></div>
<div style="left:1855.75px;top:1032.40px;width:1.30px;height:91.60px;background:#a3a3a3;"></div>
<div style="left:1126.95px;top:1125.50px;width:1.30px;height:6.50px;background:#a3a3a3;"></div>
<div style="left:1855.75px;top:1125.50px;width:1.30px;height:6.50px;background:#a3a3a3;"></div>
<div class="t" style="left:1215.31px;top:1035.00px;font-size:10.25px;color:#3a3a3a;">Esame visivo</div>
<div class="t" style="left:1321.40px;top:1050.00px;font-size:10.80px;color:#111111;font-weight:bold;">OK</div>
<div class="t" style="left:1450.91px;top:1035.00px;font-size:10.25px;color:#3a3a3a;">Prova di svasatura</div>
<div class="t" style="left:1378.50px;top:1051.00px;font-size:10.30px;color:#111111;font-weight:bold;">UNI EN ISO 8493</div>
<div class="t" style="left:1593.50px;top:1050.00px;font-size:10.80px;color:#111111;font-weight:bold;">OK</div>
<div class="t" style="left:1705.38px;top:1035.00px;font-size:10.25px;color:#3a3a3a;">Prova di tenuta</div>
<div class="t" style="left:1636.00px;top:1051.00px;font-size:10.30px;color:#111111;font-weight:bold;">UNI EN ISO 10893-1</div>
<div class="t" style="left:1831.00px;top:1050.00px;font-size:10.80px;color:#111111;font-weight:bold;">OK</div>
<div class="t" style="left:1193.37px;top:1066.00px;font-size:10.25px;color:#3a3a3a;">Controllo dimensionale</div>
<div class="t" style="left:1321.40px;top:1080.00px;font-size:10.80px;color:#111111;font-weight:bold;">OK</div>
<div class="t" style="left:1437.80px;top:1066.00px;font-size:10.25px;color:#3a3a3a;">Prova di schiacciamento</div>
<div class="t" style="left:1378.50px;top:1081.00px;font-size:10.30px;color:#111111;font-weight:bold;">UNI EN ISO 8492</div>
<div class="t" style="left:1593.50px;top:1080.00px;font-size:10.80px;color:#111111;font-weight:bold;">OK</div>
<div class="t" style="left:1654.39px;top:1066.00px;font-size:10.25px;color:#3a3a3a;">Controllo non distruttivo Eddy Current</div>
<div class="t" style="left:1636.00px;top:1081.00px;font-size:10.30px;color:#111111;font-weight:bold;">UNI EN ISO 10893-2</div>
<div class="t" style="left:1831.00px;top:1080.00px;font-size:10.80px;color:#111111;font-weight:bold;">OK</div>
<div class="t" style="left:1201.06px;top:1096.00px;font-size:10.25px;color:#3a3a3a;">Prova antimiscuglio</div>
<div class="t" style="left:1321.40px;top:1111.00px;font-size:10.80px;color:#111111;font-weight:bold;">OK</div>
<div class="t" style="left:1425.83px;top:1096.00px;font-size:10.25px;color:#3a3a3a;">Prova di piega della saldatura</div>
<div class="t" style="left:1378.50px;top:1112.00px;font-size:10.30px;color:#111111;font-weight:bold;">N.P.</div>
<div class="t" style="left:1591.00px;top:1112.00px;font-size:10.30px;color:#111111;font-weight:bold;">N.P.</div>
<div class="t" style="left:1668.35px;top:1096.00px;font-size:10.25px;color:#3a3a3a;">Prova corrosione intercristallina</div>
<div class="t" style="left:1636.00px;top:1112.00px;font-size:10.30px;color:#111111;font-weight:bold;">N. P.</div>
<div class="t" style="left:1825.63px;top:1112.00px;font-size:10.30px;color:#111111;font-weight:bold;">N. P.</div>
</body></html>
